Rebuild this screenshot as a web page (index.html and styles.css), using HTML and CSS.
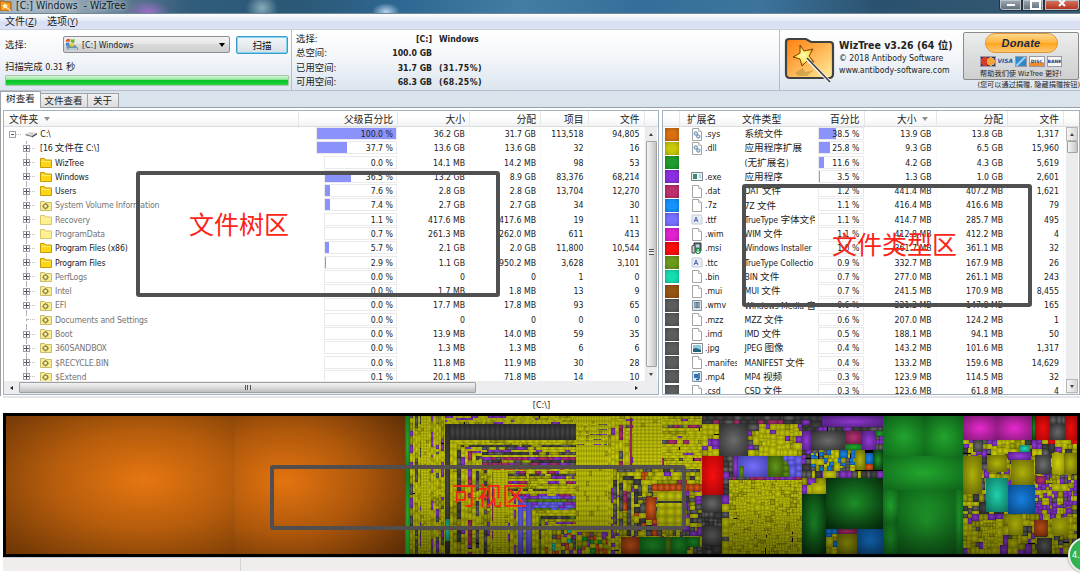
FILE: index.html
```html
<!DOCTYPE html>
<html lang="zh-CN">
<head>
<meta charset="utf-8">
<title>[C:] Windows - WizTree</title>
<link rel="stylesheet" href="styles.css">
</head>
<body>
<div class="window">
  <header class="titlebar">
    <svg class="app-icon" width="12" height="11" viewBox="0 0 12 11"><path d="M0 1h4l1 1h6v9H0z" fill="#f59a23" stroke="#9b5a12"/><path d="M5 3l1 2 2 .3-1.500 1.500.4 2L5 7.500 3 9l.5-2.200L2 5.300 4 5z" fill="#fffbd0"/><path d="M6 7l5 4" stroke="#fff"/></svg>
    <span class="title">[C:] Windows&nbsp; - WizTree</span>
    <div class="win-buttons"><i class="wb min"></i><i class="wb max"></i><i class="wb close"><svg width="8" height="7" viewBox="0 0 8 7"><path d="M1 0l6 6M7 0L1 6" stroke="#fff" stroke-width="2"/></svg></i></div>
  </header>
  <nav class="menubar"><span>文件<small>(<u>Z</u>)</small></span><span>选项<small>(<u>Y</u>)</small></span></nav>

  <section class="toolbar">
    <div class="scan">
      <div class="scan-row">
        <label>选择:</label>
        <div class="combo">
          <svg width="13" height="13" viewBox="0 0 13 13"><path d="M1 9l3-2h6l3 3v2H3z" fill="#6d96a5"/><path d="M3 10h9v2H4z" fill="#b6ccd4"/><path d="M1 2q2-2 4-1L4.500 4Q3 3 1 4z" fill="#e65426"/><path d="M6 1q2 1 4 0L9 5Q7 5 5.500 4z" fill="#6fb52c"/><path d="M1 5q2-1 3.500 0L4 8Q3 7 1 8z" fill="#3a86c8"/><path d="M5.500 5q2 1 3.500 0v3q-2 1-4 0z" fill="#f3c62b"/></svg>
          <span>[C:] Windows</span><i class="caret"></i>
        </div>
        <button class="scan-btn">扫描</button>
      </div>
      <div class="status-line">扫描完成 <small>0.31</small> 秒</div>
      <div class="progress"></div>
    </div>
    <div class="drive">
      <span>选择:</span><b>[C:]</b><b>Windows</b>
      <span>总空间:</span><b>100.0 GB</b><b></b>
      <span>已用空间:</span><b>31.7 GB</b><b class="wide">(31.75%)</b>
      <span>可用空间:</span><b>68.3 GB</b><b class="wide">(68.25%)</b>
    </div>
    <div class="about">
      <svg class="logo" width="54" height="50" viewBox="0 0 54 50">
        <defs><linearGradient id="lg" x1="0" y1="0" x2="1" y2="1"><stop offset="0" stop-color="#ff7e0c"/><stop offset=".5" stop-color="#ffb452"/><stop offset="1" stop-color="#fff0a0"/></linearGradient>
        <radialGradient id="sg"><stop offset="0" stop-color="#fffbc0"/><stop offset=".6" stop-color="#ffe84a"/><stop offset="1" stop-color="#f08a10"/></radialGradient></defs>
        <path d="M5 3h17l5 3h19q3 0 3 3v29q0 4-4 4H6q-4 0-4-4V6q0-3 3-3z" fill="url(#lg)" stroke="#3f4340" stroke-width="2.200"/>
        <path d="M11 37l8-5 2 4 9-2-7 6H14z" fill="#a28430" opacity=".45"/>
        <path d="M16 9l4 6 9-2-4 7 5 6-7-1-5 5-2-7-7-2 7-4z" fill="url(#sg)" stroke="#70300a" stroke-width=".9"/>
        <path d="M23 23l23 23" stroke="#f4f4f4" stroke-width="3.500"/><path d="M23 22l23 24" stroke="#404040" stroke-width="1.600"/>
      </svg>
      <div class="about-text"><b>WizTree v3.26 (64 位)</b><span>© 2018 Antibody Software</span><span>www.antibody-software.com</span></div>
      <div class="donate-col">
        <div class="donate-card">
          <div class="donate">Donate</div>
          <div class="cards"><i class="mc"></i><i class="visa">VISA</i><i class="amex"></i><i class="disc">DISC</i><i class="bank">BANK</i></div>
          <span>帮助我们使 WizTree 更好!</span>
        </div>
        <span class="hint">(您可以通过捐赠, 隐藏捐赠按钮)</span>
      </div>
    </div>
  </section>

  <div class="tabs"><span class="tab active">树查看</span><span class="tab">文件查看</span><span class="tab">关于</span></div>

  <main class="panes">
    <section class="pane left">
      <div class="head lgrid"><span class="name">文件夹<i class="sort"></i></span><span>父级百分比</span><span>大小</span><span>分配</span><span>项目</span><span>文件</span></div>
      <div class="pane-body">
        <div class="rows" id="tree"></div>
        <div class="vscroll"><i class="up"></i><div class="thumb"><b></b></div><i class="down"></i></div>
      </div>
      <div class="hscroll"><i class="prev"></i><div class="hthumb"><b></b></div><i class="next"></i></div>
    </section>
    <section class="pane right">
      <div class="head rgrid"><span></span><span class="ext">扩展名</span><span class="type">文件类型</span><span>百分比</span><span>大小<i class="sort"></i></span><span>分配</span><span>文件</span></div>
      <div class="pane-body">
        <div class="rows" id="types"></div>
        <div class="vscroll boxed"><i class="up"></i><div class="thumb small"></div><i class="down"></i></div>
      </div>
    </section>
  </main>

  <div class="path">[C:\]</div>
  <div class="map"><svg id="map" width="1071" height="138" viewBox="6 416 1071 138" shape-rendering="crispEdges"></svg></div>
  <footer class="statusbar"><span></span></footer>
</div>

<div class="note n1"><span>文件树区</span></div>
<div class="note n2"><span>文件类型区</span></div>
<div class="note n3"><span>可视区</span></div>
<div class="badge">4.</div>
<script src="app.js"></script>
</body>
</html>
```

FILE: styles.css
```css
* { box-sizing: border-box; }
body { margin: 0; width: 1080px; height: 573px; overflow: hidden; position: relative; background: #fff; color: #222;
  font: 8.7px/14px "DejaVu Sans Condensed", "DejaVu Sans", "Noto Sans CJK SC", sans-serif; }
i, em { font-style: normal; }
.window { display: flex; flex-direction: column; height: 573px; }
.cj { font-size: 9.6px; letter-spacing: 0; font-family: "Noto Sans CJK SC", sans-serif; line-height: 10px; }

.titlebar { height: 14px; flex: none; display: flex; align-items: flex-start; overflow: hidden; border-bottom: 1px solid #6f8898;
  background: radial-gradient(ellipse 22px 12px at 148px 12px, #9a6fc6, transparent), radial-gradient(ellipse 14px 9px at 386px 12px, #b9d5ee, transparent), radial-gradient(ellipse 16px 14px at 262px 8px, #88acb9, transparent), linear-gradient(90deg, #a3b3bf 0, #99aab7 70px, #56748b 135px, #315c7b 190px, #2b5877 300px, #2e6792 400px, #457ca3 520px, #356e9a 640px, #3d749c 760px, #2a516e 880px, #385a72 1080px); }
.title { font-size: 10.400px; line-height: 11px; margin-left: 4px; color: #101c26; text-shadow: 0 0 5px #fff; }
.win-buttons { margin-left: auto; display: flex; height: 12px; }
.wb { display: block; height: 11px; border: 1px solid #27323b; border-top: 0; background: linear-gradient(#a0aab3, #5d6b78); box-shadow: inset 0 0 0 1px #b8c4cd; position: relative; }
.min { width: 23px; border-radius: 0 0 0 4px; } .max { width: 22px; }
.close { width: 36px; background: linear-gradient(#d77863, #b02c1c); border-radius: 0 0 4px 0; text-align: center; line-height: 7px; }
.min::after { content: ""; position: absolute; left: 7px; top: 4px; width: 8px; height: 2px; background: #fff; }
.max::after { content: ""; position: absolute; left: 7px; top: 0; width: 7px; height: 6px; border: 2px solid #fff; }

.menubar { height: 16px; flex: none; display: flex; gap: 10px; padding-left: 5px; font-size: 10px; line-height: 16px; background: linear-gradient(#fdfeff, #e6ebf7 40%, #d8def2 55%, #dde3f5); border-bottom: 1px solid #c9cedb; color: #222; }
.menubar small { font-size: 9px; }

.toolbar { height: 61px; flex: none; display: flex; background: linear-gradient(#fff, #f3f6fa 45%, #dce5ef); border-bottom: 1px solid #b7bec9; font-size: 9.4px; }
.scan { width: 292px; padding: 6px 3px 0 5px; border-right: 1px solid #b4bcc6; flex: none; }
.scan-row { display: flex; height: 17px; align-items: center; }
.scan-row label { width: 58px; }
.combo { width: 167px; height: 17px; border: 1px solid #8a8f95; border-radius: 2px; background: linear-gradient(#f2f2f2, #e6e6e6 48%, #d9d9d9 50%, #cfcfcf); display: flex; align-items: center; gap: 4px; padding: 0 4px 0 1px; font-size: 8.7px; }
.caret { margin-left: auto; border: 3px solid transparent; border-top: 4px solid #000; border-bottom: 0; }
.scan-btn { width: 52px; height: 18px; margin-left: 6px; padding: 0; border: 1px solid #3c9cc8; border-radius: 2px; box-shadow: inset 0 0 0 1px #7fd4f5; background: linear-gradient(#f3f6f8, #e7ecf0 50%, #d6dde3); font: 9.6px/14px "Noto Sans CJK SC", sans-serif; color: #111; }
.status-line { margin-top: 6px; height: 15px; line-height: 15px; font-size: 9.4px; }
.status-line small { font-size: 9px; }
.progress { width: 284px; height: 11px; margin-top: 1px; border: 1px solid #a9c4ab; border-radius: 1px; background: linear-gradient(#d3f6d5, #9be8a0 38%, #0cc42a 46%, #12cc30 85%, #40d858); }
.drive { flex: 1; display: grid; grid-template-columns: 48px 88px 1fr; grid-template-rows: repeat(4, 14.300px); padding: 2px 0 0 4px; }
.drive b { font-family: "DejaVu Sans Condensed", "DejaVu Sans", sans-serif; font-size: 8.7px; }
.drive .wide { letter-spacing: .4px; }
.drive b:nth-child(3n+2) { text-align: right; } .drive b:nth-child(3n) { padding-left: 7px; }
.about { width: 301px; flex: none; display: flex; border-left: 1px solid #b4bcc6; padding: 2px 0 0 4px; }
.logo { margin-top: 4px; flex: none; }
.about-text { display: flex; flex-direction: column; padding: 6px 0 0 1px; width: 125px; font-size: 8.700px; line-height: 12.400px; white-space: nowrap; }
.about-text b { font-size: 10.500px; line-height: 14px; }
.donate-col { width: 117px; display: flex; flex-direction: column; }
.donate-card { height: 48px; width: 116px; border: 1px solid #8a8a8a; border-radius: 2px; background: linear-gradient(#eceded, #dcdddd 50%, #cdcfd1); display: flex; flex-direction: column; align-items: center; font-size: 7.200px; line-height: 11px; color: #222; white-space: nowrap; }
.donate { width: 73px; height: 20px; flex: none; border: 1px solid #e0963a; border-radius: 10px; background: linear-gradient(#ffd88c, #ffb43c 50%, #ffa51f 52%, #ffc870); font: italic bold 11px/19px "Liberation Sans", sans-serif; letter-spacing: .3px; text-align: center; color: #17294a; }
.cards { display: flex; gap: 2px; height: 11px; margin: 3px 0 1px; }
.cards i { width: 15.500px; height: 11px; border: 1px solid #99a; font: bold 4.500px/9px "DejaVu Sans", sans-serif; text-align: center; overflow: hidden; background: #f5f5f5; color: #223a7c; }
.cards .mc { background: radial-gradient(circle at 70% 50%, #f3a33c 38%, transparent 40%), radial-gradient(circle at 30% 50%, #d83a28 40%, #283a6c 42%); }
.cards .visa { font-size: 5.800px; font-style: italic; border: 0; line-height: 11px; background: none; color: #1658a6; }
.cards .amex { background: linear-gradient(135deg, #2b8ad0 35%, #bce0f5 50%, #2c86c8 60%); width: 12px; }
.cards .disc { background: linear-gradient(#fff 60%, #ef8b28 62%); }
.hint { font-size: 7.200px; line-height: 10px; white-space: nowrap; align-self: flex-end; }

.tabs { height: 17px; flex: none; display: flex; align-items: flex-end; background: #d9e3ec; border-bottom: 1px solid #98a0ab; font-size: 9.600px; }
.tab { height: 14px; line-height: 14px; padding: 0 4px 0 3px; border: 1px solid #9da3aa; border-left: 0; border-bottom: 0; background: linear-gradient(#f0f0f1, #dcdddf); text-align: center; white-space: nowrap; }
.tab.active { height: 17px; width: 41px; margin-bottom: -1px; padding: 0 4px; background: #fff; border-left: 1px solid #9da3aa; }
.tab:nth-child(2) { width: 47px; } .tab:nth-child(3) { width: 31px; }

.panes { height: 288px; flex: none; display: flex; gap: 3px; padding: 2px 0 0 2px; background: #fff; border-left: 1px solid #9a9ea3; }
.pane { display: flex; flex-direction: column; height: 285px; border: 1px solid #a3b2c0; overflow: hidden; }
.left { width: 656px; flex: none; } .right { width: 418px; flex: none; }
.head { height: 16px; flex: none; line-height: 17px; font-size: 9.800px; background: linear-gradient(#fff 45%, #f1f2f4); border-bottom: 1px solid #d9dbde; color: #222; }
.head > span { text-align: right; padding-right: 4px; border-right: 1px solid #e6e7e9; white-space: nowrap; }
.head > .name { text-align: left; padding-left: 5px; }
.head > .ext { text-align: left; padding-left: 7px; border-right-color: transparent; }
.head > .type { text-align: left; padding-left: 2px; border-right-color: transparent; }
.lgrid { display: grid; grid-template-columns: 295px 99px 72px 71px 47.500px 56px; }
.rgrid { display: grid; grid-template-columns: 17px 60px 75.500px 49px 72px 71.500px 56px; }
.sort { display: inline-block; border: 3.500px solid transparent; border-top: 4px solid #909090; border-bottom: 0; margin-left: 6px; vertical-align: 2px; }
.right .sort { margin-left: 5px; }
.right .head > span:nth-child(5) { padding-right: 8px; }
.pane-body { flex: 1; min-height: 0; display: flex; overflow: hidden; }
.rows { flex: 1; min-width: 0; overflow: hidden; position: relative; }
.row { height: 14.290px; line-height: 14.290px; align-items: center; white-space: nowrap; }
.row .n { text-align: right; padding-right: 4px; border-right: 1px solid #f8f8f8; height: 100%; }
.row .tree { display: flex; align-items: center; height: 100%; position: relative; letter-spacing: -.16px; }
.tree.root { padding-left: 5px; } .tree.child { padding-left: 19px; }
.child::before { content: ""; position: absolute; left: 22px; top: 0; height: 100%; border-left: 1px dashed #b4b4b8; }
.exp { width: 7px; height: 7px; flex: none; border: 1px solid #9ba1b2; background: linear-gradient(#555, #555) center / 3px 1px no-repeat, #fff; position: relative; }
.exp.plus { background: linear-gradient(#556, #556) center / 5px 1px no-repeat, linear-gradient(#556, #556) center / 1px 5px no-repeat, #fff; }
.exp.none { visibility: hidden; }
.twig { width: 5px; flex: none; border-top: 1px dotted #bbb; margin-right: 5px; }
.root .twig { margin-right: 2px; }
.exp.none + .twig { width: 8px; margin-left: -3px; }
.tree svg { margin-right: 3px; flex: none; }
.dim { color: #747474; }
.pct { display: flex; justify-content: flex-end; height: 100%; padding-right: 1px; }
.bar { position: relative; height: 13px; border: 1px solid #eaeaec; text-align: right; line-height: 13px; padding-right: 3px; overflow: hidden; }
.bar i { position: absolute; left: 0; top: 0; height: 13px; background: #8b93fa; }
.bar span { position: relative; }
.sw { width: 14px; height: 13px; margin-left: 1.500px; }
.row .icon { height: 14px; padding-left: 11px; display: flex; align-items: center; gap: 2px; overflow: hidden; width: 57px; }
.icon svg { flex: none; }
.row .kind { padding-left: 4.500px; overflow: hidden; height: 14px; width: 75px; letter-spacing: -.1px; }

.vscroll { width: 12px; flex: none; margin-right: 1px; background: #ececee; display: flex; flex-direction: column; align-items: center; }
.vscroll i { height: 14px; width: 12px; display: flex; align-items: center; justify-content: center; flex: none; }
.up::after { content: ""; border: 2.500px solid transparent; border-bottom: 3px solid #444; border-top: 0; }
.down::after { content: ""; border: 2.500px solid transparent; border-top: 3px solid #444; border-bottom: 0; }
.thumb { width: 11px; flex: 1; border: 1px solid #a3a3a3; border-radius: 1px; background: linear-gradient(90deg, #f4f4f4, #d9d9db 60%, #c2c2c4); display: flex; align-items: center; justify-content: center; }
.thumb b { width: 5px; height: 6px; background: repeating-linear-gradient(#555 0 1px, #eee 1px 2.500px); margin-top: -4px; }
.thumb.small { flex: none; height: 12px; margin-bottom: auto; }
.vscroll.boxed i { border: 1px solid #b5b5b5; background: linear-gradient(90deg, #f5f5f5, #d6d6d8); }
.boxed .down { margin-bottom: 1px; }
.hscroll { height: 13px; flex: none; display: flex; background: #ededef; align-items: center; }
.hscroll i { width: 15px; display: flex; justify-content: center; flex: none; }
.prev::after { content: ""; border: 2.500px solid transparent; border-right: 3px solid #222; border-left: 0; }
.next::after { content: ""; border: 2.500px solid transparent; border-left: 3px solid #222; border-right: 0; }
.hthumb { width: 457px; height: 11px; margin-right: 153px; border: 1px solid #9e9e9e; border-radius: 1px; background: linear-gradient(#f3f3f3, #dcdcde 50%, #bdbdbf); display: flex; align-items: center; justify-content: center; }
.hthumb b { width: 6px; height: 5px; background: repeating-linear-gradient(90deg, #555 0 1px, #ddd 1px 2.500px); }

.path { height: 17px; flex: none; text-align: center; line-height: 15px; border-top: 2px solid #e4e5e8; margin-left: 3px; font-size: 9px; }
.map { height: 144px; flex: none; margin-left: 3px; background: #000; padding: 3px; }
.map svg { display: block; }
.statusbar { height: 14px; flex: none; margin: 0 0 2px 3px; background: #f0edec; border-top: 1px solid #c5ccd2; }
.statusbar span { display: block; width: 238px; height: 13px; border-right: 1px solid #d3d3d3; }

.note { position: absolute; border: 4px solid #505050; border-radius: 3px; color: #fb2318; font: 400 25px/30px "Noto Sans CJK SC", sans-serif; white-space: nowrap; }
.note span { position: absolute; }
.n1 { left: 136px; top: 171px; width: 364px; height: 126px; } .n1 span { left: 49px; top: 33px; }
.n2 { left: 742px; top: 184px; width: 290px; height: 123px; } .n2 span { left: 86px; top: 40px; }
.n3 { left: 270px; top: 465px; width: 416px; height: 65px; border-color: #514e4d; } .n3 span { left: 178px; top: 10px; }
.badge { position: absolute; left: 1068px; top: 537px; width: 36px; height: 36px; border: 2px solid #e8f0e8; border-radius: 50%; background: radial-gradient(circle, #3cbf5c, #27a849); color: #fff; font-size: 9px; line-height: 32px; padding-left: 2px; box-shadow: 0 0 2px #555; }
```

FILE: app.js
```js
// Gives Chinese runs their own slightly larger size.
const cj = s => s.replace(/[\u4e00-\u9fff]+/g, m => `<span class="cj">${m}</span>`);

const folder = (fill, line) => `<svg width="12" height="10" viewBox="0 0 12 10"><path d="M.5.5h4l1 1.500h6v7.500H.5z" fill="${fill}" stroke="${line}"/><path d="M1.500 3.500h9" stroke="#fff6a0" opacity=".7"/></svg>`;
const icons = {
  f: folder('#ffd616', '#c79a07'),
  d: folder('#fff08f', '#d9c56c'),
  g: `<svg width="12" height="10" viewBox="0 0 12 10"><path d="M.5.5h4l1 1h6v8H.5z" fill="#f8ec8c" stroke="#c9bc70"/><circle cx="5.500" cy="5.300" r="2.100" fill="#fff3a0" stroke="#8b854e" stroke-width="1.300"/><path d="M5.500 2v1M5.500 7.500v1M2.200 5.300h1M7.800 5.300h1" stroke="#8b854e"/></svg>`,
  r: `<svg width="12" height="8" viewBox="0 0 12 8"><path d="M0 4l5-2 7 1-5 3z" fill="#d6d6d6"/><path d="M0 4l7 2v1L1 5.500z" fill="#777"/><path d="M7 6l5-3v1.500L7 7.500z" fill="#444"/></svg>`,
  n: ''
};

const tree = [
  ['C:\\','r',100.0,'36.2 GB','31.7 GB','113,518','94,805'],
  ['[16 文件在 C:\\]','n',37.7,'13.6 GB','13.6 GB','32','16'],
  ['WizTree','f',0.0,'14.1 MB','14.2 MB','98','53'],
  ['Windows','f',36.5,'13.2 GB','8.9 GB','83,376','68,214'],
  ['Users','f',7.6,'2.8 GB','2.8 GB','13,704','12,270'],
  ['System Volume Information','g',7.4,'2.7 GB','2.7 GB','34','30'],
  ['Recovery','d',1.1,'417.6 MB','417.6 MB','19','11'],
  ['ProgramData','d',0.7,'261.3 MB','262.0 MB','611','413'],
  ['Program Files (x86)','f',5.7,'2.1 GB','2.0 GB','11,800','10,544'],
  ['Program Files','f',2.9,'1.1 GB','950.2 MB','3,628','3,101'],
  ['PerfLogs','g',0.0,'0','0','1','0'],
  ['Intel','g',0.0,'1.7 MB','1.8 MB','13','9'],
  ['EFI','g',0.0,'17.7 MB','17.8 MB','93','65'],
  ['Documents and Settings','g',0.0,'0','0','0','0'],
  ['Boot','g',0.0,'13.9 MB','14.0 MB','59','35'],
  ['360SANDBOX','g',0.0,'1.3 MB','1.3 MB','6','6'],
  ['$RECYCLE.BIN','g',0.0,'11.8 MB','11.9 MB','30','28'],
  ['$Extend','g',0.1,'20.1 MB','71.8 MB','14','10']
];
document.getElementById('tree').innerHTML = tree.map((r, i) => {
  const w = i < 2 ? 81.5 : 73.5;
  const dim = r[1] === 'g' || r[1] === 'd' ? ' dim' : '';
  const exp = i === 0 ? '' : r[0].startsWith('Doc') ? ' none' : ' plus';
  const fill = r[2] >= 1.5 ? `<i style="width:${r[2] < 3 ? 1 : w * r[2] / 100}px"></i>` : '';
  return `<div class="row lgrid"><div class="tree ${i ? 'child' : 'root'}${dim}"><em class="exp${exp}"></em><em class="twig"></em>${i ? '' : '&nbsp;'}${icons[r[1]]}<span>${cj(r[0])}</span></div>` +
    `<div class="pct"><div class="bar" style="width:${w}px">${fill}<span>${r[2].toFixed(1)} %</span></div></div>` +
    r.slice(3).map(v => `<div class="n">${v}</div>`).join('') + '</div>';
}).join('');

const page = inner => `<svg width="12" height="13" viewBox="0 0 12 13"><path d="M1.500.5h6l3 3v9h-9z" fill="#fff" stroke="#a4a4a4"/><path d="M7.500.5v3h3" fill="#eee" stroke="#a4a4a4" stroke-width=".7"/>${inner}</svg>`;
const box = inner => `<svg width="12" height="13" viewBox="0 0 12 13">${inner}</svg>`;
const fi = {
  p: page(''),
  s: page('<circle cx="4.800" cy="5.500" r="1.700" fill="#cfe0ef" stroke="#5d87ad"/><circle cx="7.300" cy="8.500" r="1.700" fill="#cfe0ef" stroke="#5d87ad"/>'),
  e: box('<path d="M.5 2.500h11v8H.5z" fill="#eef3f6" stroke="#77868e"/><path d="M2 4h4v5H2z" fill="#3c8c72"/><path d="M8 5h2M8 7h2" stroke="#9ab"/>'),
  t: box('<path d="M1 2h9l1 2v7H1z" fill="#e9eef5" stroke="#c4ccd6"/><path d="M3 9l2-5 2 5M4 7.500h2" stroke="#5367b5" fill="none"/>'),
  m: box('<path d="M3 1h7v8H3z" fill="#5f6f76" stroke="#333"/><path d="M4.500 2.500h4v3h-4z" fill="#bcd9e8"/><path d="M1 4l3-1v8H1z" fill="#d0d0d0" stroke="#444"/><circle cx="7" cy="9" r="3" fill="#1d8d4b"/><path d="M7 7v4M5.500 9.500L7 11l1.500-1.500" stroke="#fff" fill="none"/>'),
  v: box('<path d="M1.500 1.500h9v10h-9z" fill="#dde5ea" stroke="#8995a0"/><path d="M3 3h6v6H3z" fill="#537288"/><path d="M4 3v6M8 3v6M3 5h6M3 7h6" stroke="#b4c9d6" stroke-width=".7"/>'),
  j: box('<path d="M.5 1.500h11v10H.5z" fill="#fff" stroke="#888"/><path d="M2 3h8v7H2z" fill="#8fc8dc"/><path d="M2 7l3-1 5 2v2H2z" fill="#216277"/>'),
  a: box('<path d="M1.500 1.500h9v10h-9z" fill="#dcebf6" stroke="#7f97aa"/><path d="M3 4h4v4H3z" fill="#2f73ae"/><path d="M8 3v6M5 9.500h3" stroke="#1f5890" stroke-width="1.500"/>'),
  n: ''
};
const types = [
  ['#d87010','s','.sys','系统文件',38.5,'13.9 GB','13.8 GB','1,317'],
  ['#c8c808','s','.dll','应用程序扩展',25.8,'9.3 GB','6.5 GB','15,960'],
  ['#1f9c2b','n','','(无扩展名)',11.6,'4.2 GB','4.3 GB','5,619'],
  ['#8a2fe0','e','.exe','应用程序',3.5,'1.3 GB','1.0 GB','2,601'],
  ['#bc306c','p','.dat','DAT 文件',1.2,'441.4 MB','407.2 MB','1,621'],
  ['#1592ff','p','.7z','7Z 文件',1.1,'416.4 MB','416.6 MB','79'],
  ['#7670ff','t','.ttf','TrueType 字体文件',1.1,'414.7 MB','285.7 MB','495'],
  ['#e022d0','p','.wim','WIM 文件',1.1,'412.8 MB','412.2 MB','4'],
  ['#fa0c0c','m','.msi','Windows Installer',1.0,'361.7 MB','361.1 MB','32'],
  ['#6a9a1c','t','.ttc','TrueType Collectio',0.9,'332.7 MB','167.9 MB','26'],
  ['#14deb0','p','.bin','BIN 文件',0.7,'277.0 MB','261.1 MB','243'],
  ['#955514','p','.mui','MUI 文件',0.7,'241.5 MB','170.9 MB','8,455'],
  ['#5c5c5c','v','.wmv','Windows Media 音',0.6,'221.2 MB','147.8 MB','165'],
  ['#5c5c5c','p','.mzz','MZZ 文件',0.6,'207.0 MB','124.2 MB','1'],
  ['#5c5c5c','p','.imd','IMD 文件',0.5,'188.1 MB','94.1 MB','50'],
  ['#5c5c5c','j','.jpg','JPEG 图像',0.4,'143.2 MB','101.6 MB','1,317'],
  ['#5c5c5c','p','.manifest','MANIFEST 文件',0.4,'133.2 MB','159.6 MB','14,629'],
  ['#5c5c5c','a','.mp4','MP4 视频',0.3,'123.9 MB','114.5 MB','32'],
  ['#5c5c5c','p','.csd','CSD 文件',0.3,'123.6 MB','61.8 MB','4']
];
document.getElementById('types').innerHTML = types.map(r => {
  const fill = r[4] >= 1.5 ? `<i style="width:${45 * r[4] / 100}px"></i>` : '';
  return `<div class="row rgrid"><div class="sw" style="background:radial-gradient(${r[0]} 40%, color-mix(in srgb, ${r[0]} 78%, #000))"></div><div class="icon">${fi[r[1]]}<span>${r[2]}</span></div><div class="kind">${cj(r[3])}</div>` +
    `<div class="pct"><div class="bar" style="width:46px">${fill}<span>${r[4].toFixed(1)} %</span></div></div>` +
    r.slice(5).map(v => `<div class="n">${v}</div>`).join('') + '</div>';
}).join('');

// Treemap: cushion-shaded blocks, nested by folder.
const C = {
  o: ['#e47410','#7a3e08'], g: ['#24ac30','#0d6418'], G: ['#1f9a2c','#03260a'], y: ['#d2d40c','#8a8a02'], Y: ['#b4b60a','#626204'],
  k: ['#707070','#2c2c2c'], p: ['#9a3ce0','#4a1c78'], r: ['#ff1010','#a80404'], b: ['#7470ff','#403ca8'], B: ['#1888f0','#0a4a88'],
  m: ['#f82cdc','#7a1870'], t: ['#20e0b8','#0e7462'], v: ['#649818','#34540c'], w: ['#c03478','#601840'], e: ['#e8621e','#7c2c08'], D: ['#4a4a4a','#242424']
};
let seed = 7;
const rnd = () => (seed = (seed * 16807) % 2147483647) / 2147483647;
const pick = s => s[Math.floor(rnd() * s.length)];
let defs = '', out = '';
for (const k in C) {
  defs += `<radialGradient id="c_${k}" r=".74"><stop offset="0" stop-color="${C[k][0]}"/><stop offset="1" stop-color="${C[k][1]}"/></radialGradient>`;
}
defs += '<radialGradient id="o1" gradientUnits="userSpaceOnUse" cx="0" cy="0" r="1" gradientTransform="translate(144 480) scale(185 100)"><stop offset="0" stop-color="#e67610"/><stop offset=".5" stop-color="#b55c0c"/><stop offset="1" stop-color="#713806"/></radialGradient>' +
  '<radialGradient id="o2" gradientUnits="userSpaceOnUse" cx="0" cy="0" r="1" gradientTransform="translate(285 481) scale(155 105)"><stop offset="0" stop-color="#e47410"/><stop offset=".5" stop-color="#ad570b"/><stop offset="1" stop-color="#5e2e06"/></radialGradient>' +
  '<linearGradient id="shade" x2="0" y2="1"><stop offset="0" stop-color="#000" stop-opacity=".1"/><stop offset=".3" stop-color="#000" stop-opacity="0"/><stop offset=".65" stop-color="#000" stop-opacity=".08"/><stop offset="1" stop-color="#000" stop-opacity=".42"/></linearGradient>';
const f = n => Math.round(n * 10) / 10;
function rect(x, y, x2, y2, k) {
  if (x2 - x < 0.4 || y2 - y < 0.4) return;
  out += `<rect x="${f(x)}" y="${f(y)}" width="${f(x2 - x)}" height="${f(y2 - y)}" fill="url(#${k.length > 1 ? k : 'c_' + k})"/>`;
}
function mosaic(x, y, x2, y2, pal, min) {
  const w = x2 - x, h = y2 - y;
  if ((w < min * 1.7 && h < min * 1.7) || (w < min * 3 && h < min * 3 && rnd() < .15)) return rect(x, y, x2, y2, pick(pal));
  const t = .3 + rnd() * .4;
  if (w > h) { const c = x + w * t; mosaic(x, y, c, y2, pal, min); mosaic(c, y, x2, y2, pal, min); }
  else { const c = y + h * t; mosaic(x, y, x2, c, pal, min); mosaic(x, c, x2, y2, pal, min); }
}
// A strip cut across its length into short cells.
function strip(x, y, x2, y2, pal) {
  const vert = y2 - y > x2 - x;
  let a = vert ? y : x;
  const end = vert ? y2 : x2;
  while (a < end) {
    const n = Math.min(end, a + 2 + rnd() * 9), k = pick(pal);
    vert ? rect(x, a, x2, n, k) : rect(a, y, n, y2, k);
    a = n;
  }
}
// Strips wrap the top-left corner, working inwards.
function nest(x, y, x2, y2, pals, sx, sy) {
  let i = 0;
  while (x < x2 - 4 && y < y2 - 4) {
    const dx = sx * (.6 + rnd() * .8), dy = sy * (.6 + rnd() * .8);
    strip(x, y, Math.min(x + dx, x2), y2, pals[i % pals.length]);
    strip(x + dx, y, x2, Math.min(y + dy, y2), pals[i % pals.length]);
    x += dx; y += dy; i++;
  }
  if (x < x2 && y < y2) mosaic(x, y, x2, y2, pals[0], 3);
}
function bricks(x, y, x2, y2, w, h) {
  for (let a = x; a < x2; a += w) for (let b = y; b < y2; b += h) rect(a, b, Math.min(a + w, x2), Math.min(b + h, y2), rnd() < .94 ? 'y' : 'Y');
}

rect(6, 416, 235, 554, 'o1'); rect(235, 416, 405, 554, 'o2');
rect(405, 416, 410, 475, 'g'); rect(405, 475, 410, 554, 'g');
for (let x = 410; x < 445; x += 2.6) strip(x, 416, x + 2.6, 554, x % 5 < 1.5 ? 'yyYpk' : 'yyyyyYy');
bricks(421, 416, 429, 554, 2.7, 3);
for (let y = 416; y < 424; y += 2) strip(445, y, 576, y + 2, 'yyyYyyp');
rect(445, 424, 450, 554, 'D'); rect(445, 519, 450, 541, 't');
for (let x = 450; x < 576; x += 5) rect(x, 424, Math.min(576, x + 5), 440, 'D');
nest(450, 440, 576, 554, ['yyyyY','yyyY','DkDY','yyyYp','yyyy','pyYw','yyyY','Dkyy'], 3, 2.5);
for (let y = 447; y < 470; y += 2.6) strip(482, y, 576, y + 2.6, pick(['yyyyY','yyYy','wpwk','DDkY','eyYe','ypyk']));
bricks(493, 470, 508, 554, 4, 2.5);
for (let y = 471; y < 496; y += 2.5) strip(508, y, 576, y + 2.5, pick(['yyyY','yyyY','ypYw','yyyD','kDyy']));
for (let y = 496; y < 510; y += 3) strip(520, y, 576, y + 3, pick(['bbv','bbk','kvv','bp']));
rect(518, 496, 523, 554, 'b'); rect(526, 502, 532, 554, 'b');
nest(532, 510, 576, 554, ['yyyY','yyyy','Dkv','yyY','yyep'], 3, 3);
mosaic(552, 530, 576, 554, 'yyYewtkp', 3);
bricks(576, 416, 608, 554, 2.6, 5);
for (let y = 424; y < 446; y += 5) strip(577, y, 607, y + 1.2, 'pykyy');
mosaic(577, 532, 610, 554, 'yyYYekgp', 3.5);
nest(608, 416, 702, 554, ['yyyY','yyyp','yyyy','yYkw','yyyy','yyyY'], 3.2, 2.8);
bricks(633, 416, 662, 465, 4, 3.5);
rect(630, 418, 632, 465, 'w');
nest(613, 469, 700, 536, ['DkYk','yyYp','YyDk','yYew'], 4, 3.5);
mosaic(634, 472, 652, 536, 'YyykDe', 4);
for (let x = 652; x < 701; x += 6) rect(x, 484, x + 6, 491, 'e');
rect(646, 497, 656, 520, 'e'); bricks(657, 492, 682, 526, 9, 8); rect(657, 501, 682, 503, 'D');
mosaic(682, 492, 702, 536, 'pyYkkD', 4);
rect(621, 537, 640, 554, 'e'); rect(640, 537, 665, 554, 'g'); rect(665, 537, 671, 554, 'v'); rect(671, 537, 687, 554, 'g'); rect(687, 537, 700, 547, 'g'); mosaic(687, 547, 702, 554, 'kkgy', 3);

strip(702, 416, 802, 420, 'DDkDkD'); strip(702, 420, 802, 424, 'DDkwD');
mosaic(702, 424, 719, 456, 'yyyyYp', 5); rect(719, 424, 748, 456, 'k'); mosaic(748, 424, 759, 456, 'yyYpk', 4); mosaic(759, 424, 802, 456, 'yyyyyYp', 4);
rect(702, 456, 723, 495, 'r'); mosaic(723, 456, 733, 479, 'kkDp', 5);
rect(733, 456, 738, 477, 'p'); rect(738, 456, 768, 477, 'b'); rect(739, 466, 744, 477, 'v'); rect(768, 456, 783, 477, 'v'); mosaic(783, 456, 802, 477, 'bbbv', 5);
strip(729, 477, 802, 479.5, 'wrkp');
rect(702, 495, 722, 512, 'k'); mosaic(702, 512, 722, 526, 'kkD', 3.5); rect(702, 526, 722, 545, 'k'); mosaic(702, 545, 722, 554, 'kD', 5); strip(722, 495, 729, 554, 'pykyp'); mosaic(723, 479, 729, 495, 'kDy', 4);
mosaic(729, 479.5, 761, 520, 'yyyyyY', 2.5); mosaic(761, 479.5, 802, 516, 'yyyyyyY', 2.5); mosaic(729, 520, 761, 554, 'yyyyyY', 2.3); mosaic(761, 516, 802, 554, 'yyyyyyY', 2.2);

mosaic(802, 416, 822, 430, 'kDpD', 5); rect(822, 416, 883, 427, 'p'); strip(802, 427, 883, 431, 'DkpD');
rect(802, 431, 811, 450, 'p'); rect(811, 431, 845, 450, 'k'); rect(845, 431, 862, 444, 'w'); rect(845, 444, 862, 450, 'g'); rect(862, 431, 876, 450, 'p'); mosaic(876, 431, 883, 450, 'pgk', 4);
mosaic(802, 450, 811, 471, 'kDp', 4); mosaic(811, 450, 855, 471, 'yyYBBk', 3); rect(855, 450, 865, 470, 'Y'); rect(865, 453, 873, 464, 'B'); rect(865, 464, 873, 470, 'e'); rect(873, 450, 883, 470, 'G');
mosaic(802, 471, 883, 478, 'kkDyp', 5); rect(823, 471, 836, 478, 'y'); mosaic(802, 478, 826, 494, 'DpyY', 7); mosaic(811, 483, 826, 494, 'yYe', 6);
rect(802, 494, 826, 554, 'G'); rect(826, 478, 883, 529, 'G');
mosaic(826, 529, 837, 554, 'yBBY', 4); rect(837, 529, 857, 534, 'w'); rect(837, 534, 857, 554, 'Y'); rect(857, 529, 883, 554, 'B');

rect(883, 416, 925, 456, 'g'); rect(925, 416, 963, 456, 'g'); rect(883, 456, 963, 490, 'g'); rect(883, 490, 898, 523, 'g'); rect(883, 523, 898, 554, 'g'); rect(898, 490, 955, 554, 'g'); rect(955, 490, 963, 554, 'g');

rect(963, 416, 997, 440, 'm'); rect(997, 416, 1032, 440, 'm'); rect(1032, 416, 1036, 440, 'G'); rect(1036, 416, 1050, 440, 'r'); mosaic(1050, 416, 1065, 424, 'kkr', 5); rect(1050, 424, 1065, 440, 'k'); rect(1065, 416, 1077, 440, 'r');
mosaic(963, 440, 1077, 514, 'yyyYYpkD', 4.5);
strip(1048, 440, 1077, 444, 'rrey');
rect(963, 456, 982, 494, 'Y'); rect(973, 440, 983, 452, 'k'); rect(987, 455, 1007, 472, 'Y'); rect(1019, 445, 1030, 452, 't'); rect(1008, 452, 1031, 460, 'p'); rect(1011, 460, 1034, 485, 'Y');
rect(1035, 455, 1051, 474, 'k'); rect(1052, 453, 1064, 474, 'y'); rect(1064, 453, 1077, 474, 'Y');
mosaic(1035, 475, 1077, 514, 'yyYpppk', 3); rect(1036, 476, 1046, 484, 'w');
rect(986, 478, 1008, 512, 't'); rect(1008, 485, 1035, 514, 'B');
mosaic(963, 514, 1077, 554, 'yyyyYYpk', 4.5); mosaic(983, 520, 998, 554, 'yyyY', 2.5);
rect(1008, 515, 1023, 535, 'y'); rect(1034, 520, 1048, 536, 'e'); rect(1037, 538, 1052, 554, 'k'); rect(1000, 545, 1008, 554, 'p'); rect(1052, 518, 1068, 535, 'y');

out += '<rect x="410" y="416" width="667" height="138" fill="url(#shade)"/>';
document.getElementById('map').innerHTML = `<defs>${defs}</defs>${out}`;
```
